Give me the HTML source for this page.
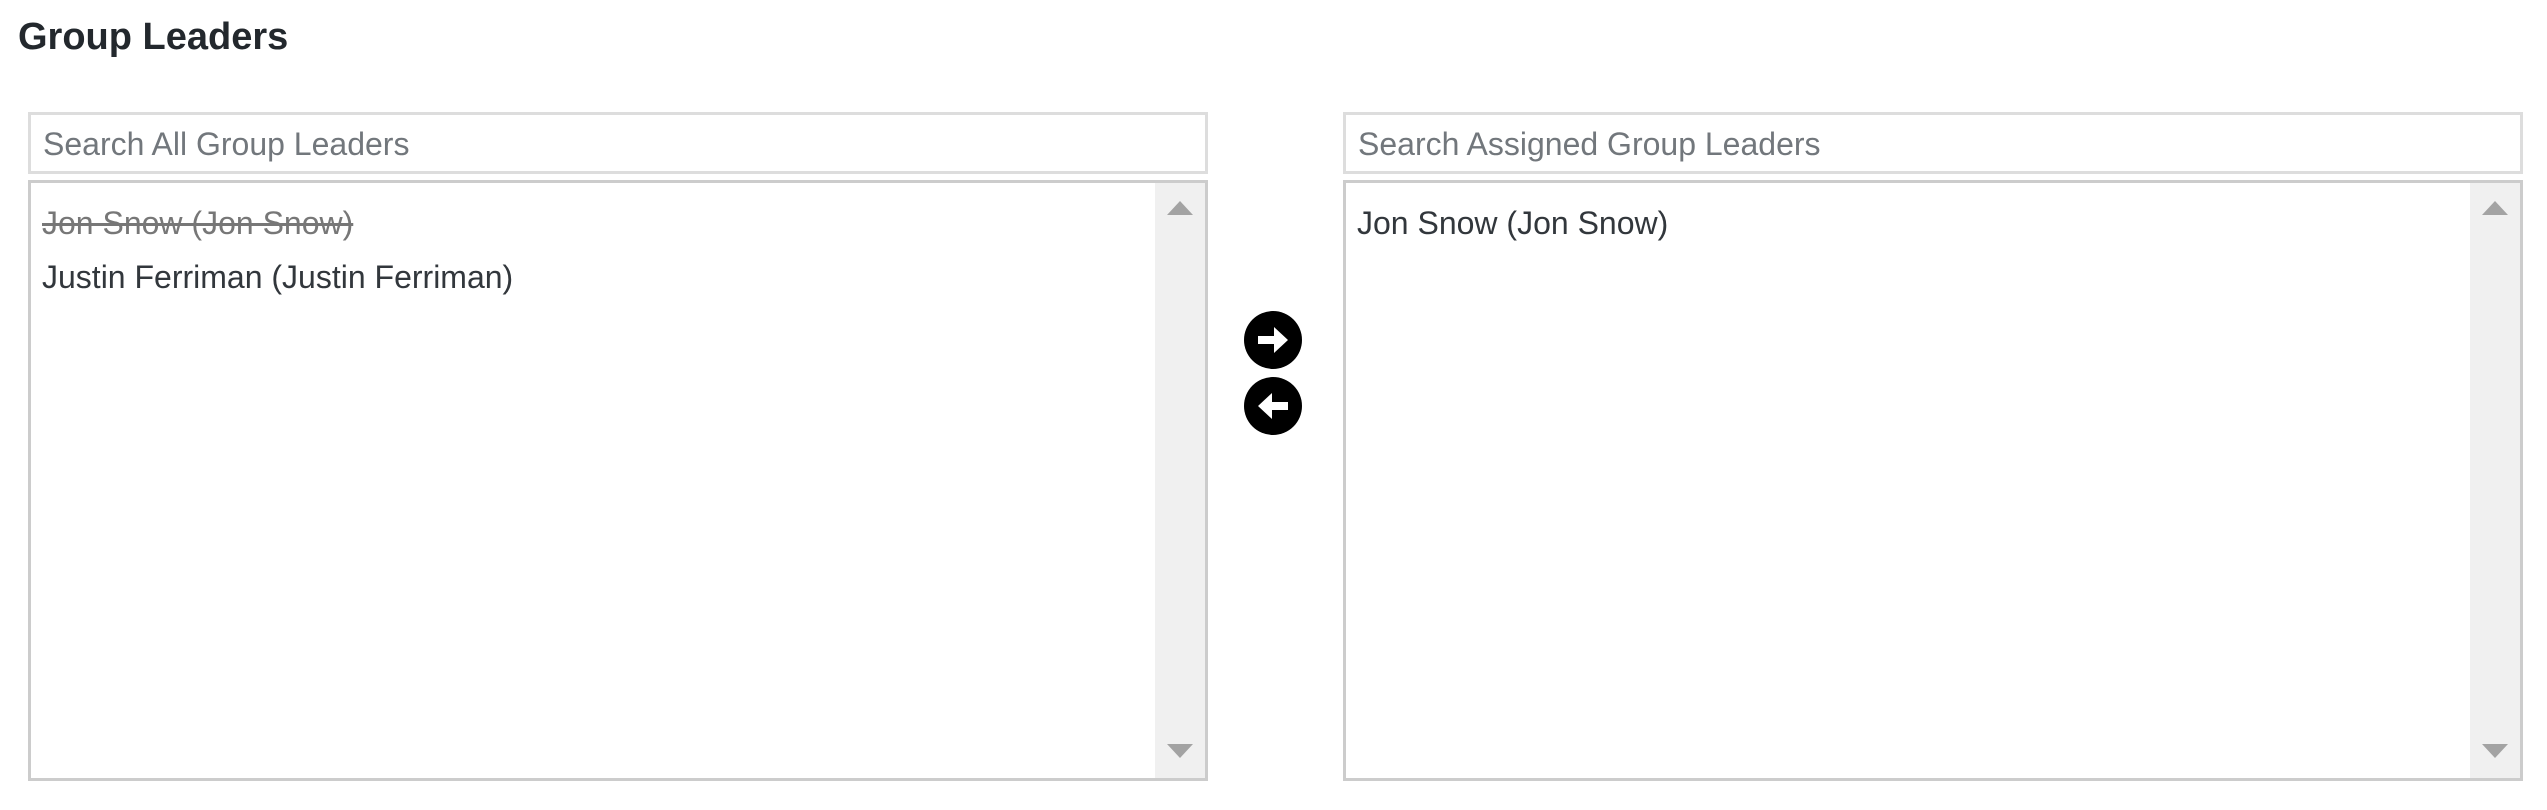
<!DOCTYPE html>
<html><head><style>
body{margin:0;width:2547px;height:810px;background:#fff;font-family:"Liberation Sans",sans-serif;position:relative;overflow:hidden}
.abs{position:absolute;box-sizing:border-box}
h1{position:absolute;left:18px;top:16px;margin:0;font-size:38px;font-weight:bold;color:#23282d}
.inp{border:3px solid #ddd;height:62px;top:112px;color:#72777c;font-size:32px;line-height:58px;padding-left:12px}
.list{border:3px solid #ccc;top:180px;height:601px;background:#fff}
.sb{position:absolute;right:0;top:0;bottom:0;width:50px;background:#f0f0f0}
.up{position:absolute;left:12px;top:18px;width:0;height:0;border-left:13px solid transparent;border-right:13px solid transparent;border-bottom:14px solid #a3a3a3}
.dn{position:absolute;left:12px;bottom:20px;width:0;height:0;border-left:13px solid transparent;border-right:13px solid transparent;border-top:14px solid #a3a3a3}
.it{position:absolute;left:11px;font-size:32px;color:#32373c;white-space:nowrap}
</style></head><body>
<h1>Group Leaders</h1>
<div class="abs inp" style="left:28px;width:1180px">Search All Group Leaders</div>
<div class="abs list" style="left:28px;width:1180px">
<div class="it" style="top:22px;color:#777;text-decoration:line-through">Jon Snow (Jon Snow)</div>
<div class="it" style="top:76px">Justin Ferriman (Justin Ferriman)</div>
<div class="sb"><div class="up"></div><div class="dn"></div></div>
</div>
<svg class="abs" style="left:1244px;top:311px" width="58" height="124" viewBox="0 0 58 124">
<circle cx="29" cy="29" r="29" fill="#000"/>
<path d="M14 25h16v-9l14 13-14 13v-9H14z" fill="#fff"/>
<circle cx="29" cy="95" r="29" fill="#000"/>
<path d="M44 91H28v-9L14 95l14 13v-9h16z" fill="#fff"/>
</svg>
<div class="abs inp" style="left:1343px;width:1180px">Search Assigned Group Leaders</div>
<div class="abs list" style="left:1343px;width:1180px">
<div class="it" style="top:22px">Jon Snow (Jon Snow)</div>
<div class="sb"><div class="up"></div><div class="dn"></div></div>
</div>
</body></html>
